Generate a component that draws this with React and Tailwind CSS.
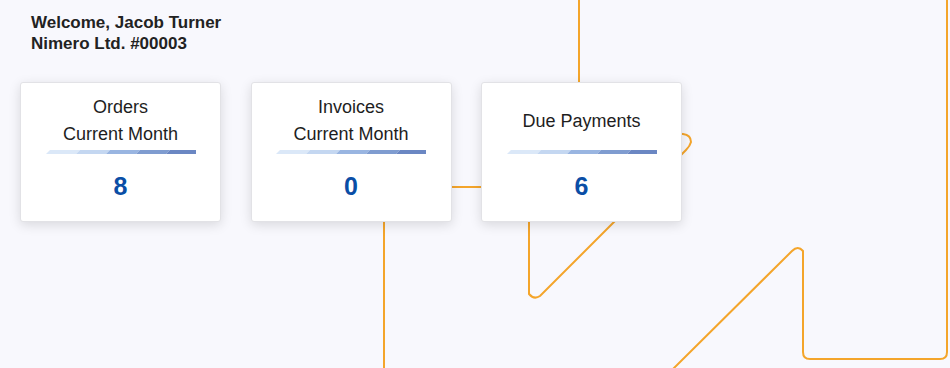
import React from "react";

const segColors = ["#dbe8f8", "#c4d7f1", "#99b5e1", "#7f9cd0", "#6b87c3"];

function Bar() {
  return (
    <svg width="150" height="4" viewBox="0 0 150 4" className="block">
      {segColors.map((c, i) => {
        const x0 = i * 30;
        const x1 = x0 + 30;
        const pts =
          i === 4
            ? `${x0 + 4},0 150,0 150,4 ${x0},4`
            : `${x0 + 4},0 ${x1 + 4},0 ${x1},4 ${x0},4`;
        return <polygon key={i} points={pts} fill={c} />;
      })}
    </svg>
  );
}

function Card({ lines, value }) {
  return (
    <div className="relative z-10 flex h-[140px] w-[201px] flex-col items-center rounded-[3px] border border-[#e2e2e6] bg-white pt-[11px] shadow-[0_3px_12px_rgba(0,0,0,0.13)]">
      <div className="flex h-[54px] flex-col items-center justify-center text-[18px] leading-[27px] text-[#1e1e1e]">
        {lines.map((l) => (
          <div key={l}>{l}</div>
        ))}
      </div>
      <div className="mt-[2px]">
        <Bar />
      </div>
      <div className="mt-[20px] text-[25px] font-bold leading-[24px] text-[#0a4ea6]">
        {value}
      </div>
    </div>
  );
}

export default function App() {
  return (
    <div
      className="relative h-[368px] w-[950px] overflow-hidden bg-[#f8f8fd]"
      style={{ fontFamily: '"Liberation Sans", Arial, sans-serif' }}
    >
      <svg
        className="absolute inset-0"
        width="950"
        height="368"
        viewBox="0 0 950 368"
        fill="none"
        stroke="#f4a52b"
        strokeWidth="2"
      >
        <path d="M579 0 V100" />
        <path d="M673 369 L792 251 Q798 245 803 251 L803 352 Q803 359 810 359 L940 359 Q947 359 947 352 L947 0" />
        <path d="M670 133 L683 134 Q691 135 691 142 Q690 146 686 150 L540 296 Q534 300 529 294 L529 200" />
        <path d="M440 187 H490" />
        <path d="M384 200 V370" />
      </svg>
      <div className="relative px-5 pt-[12px]">
        <div className="pl-[11px] text-[17px] font-bold leading-[21px] text-[#222]">
          <div>Welcome, Jacob Turner</div>
          <div>Nimero Ltd. #00003</div>
        </div>
        <div className="mt-[28px] flex gap-[29.5px]">
          <Card lines={["Orders", "Current Month"]} value="8" />
          <Card lines={["Invoices", "Current Month"]} value="0" />
          <Card lines={["Due Payments"]} value="6" />
        </div>
      </div>
    </div>
  );
}
